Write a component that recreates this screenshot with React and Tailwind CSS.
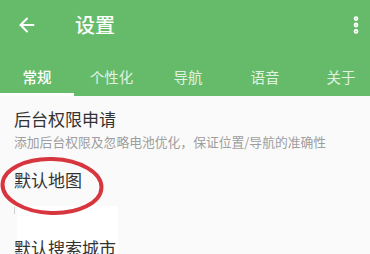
import { ArrowLeft, EllipsisVertical } from 'lucide-react';

const tabs = ['常规', '个性化', '导航', '语音', '关于'];
const tabWidths = ['w-[74px]', 'w-[75px]', 'w-[78px]', 'w-[76px]', 'w-[76px]'];

export default function App() {
  return (
    <div
      className="w-[370px] h-[254px] overflow-hidden bg-[#fafafa] relative"
      style={{ fontFamily: '"Noto Sans CJK SC", "Noto Sans", sans-serif' }}
    >
      <div className="bg-[#66bb6a] h-[96px] flex flex-col">
        <div className="h-[50px] flex items-center pl-[16px] text-white">
          <ArrowLeft size={22} strokeWidth={2.2} />
          <div className="ml-[37px] text-[20px] font-medium leading-none">设置</div>
          <div className="ml-auto mr-[3px]">
            <EllipsisVertical size={22} strokeWidth={3.2} />
          </div>
        </div>
        <div className="flex h-[46px] overflow-hidden">
          {tabs.map((t, i) => (
            <div
              key={t}
              className={`${tabWidths[i]} shrink-0 flex flex-col items-center justify-between`}
            >
              <div
                className={`pt-[15px] text-[14.5px] leading-[24px] ${
                  i === 0 ? 'text-white font-medium' : 'text-[#e0f2e1]'
                }`}
              >
                {t}
              </div>
              {i === 0 && <div className="w-full h-[3px] bg-white" />}
            </div>
          ))}
        </div>
      </div>

      <div className="px-[14px]">
        <div className="pt-[10px] text-[17px] leading-[26px] text-[#333]">后台权限申请</div>
        <div className="text-[12.8px] leading-[20px] text-[#9e9e9e]">
          添加后台权限及忽略电池优化，保证位置/导航的准确性
        </div>
        <div className="mt-[15px] text-[17px] leading-[26px] text-[#333]">默认地图</div>
        <div className="flex mt-[13px]">
          <div className="w-[1px] h-[7px] bg-[#cfcfcf] mt-[1px]" />
          <div className="ml-[2px] w-[101px] h-[52px] bg-white flex items-end">
            <div className="-ml-[3px] text-[17px] leading-[26px] text-[#333] translate-y-[3px]">
              默认搜索城市
            </div>
          </div>
        </div>
      </div>

      <svg
        className="absolute left-0 top-[154px]"
        width="110"
        height="64"
        viewBox="0 0 110 64"
      >
        <ellipse
          cx="52"
          cy="32"
          rx="49.5"
          ry="27"
          transform="rotate(2 52 32)"
          fill="none"
          stroke="#d7363f"
          strokeWidth="4"
        />
      </svg>
    </div>
  );
}
